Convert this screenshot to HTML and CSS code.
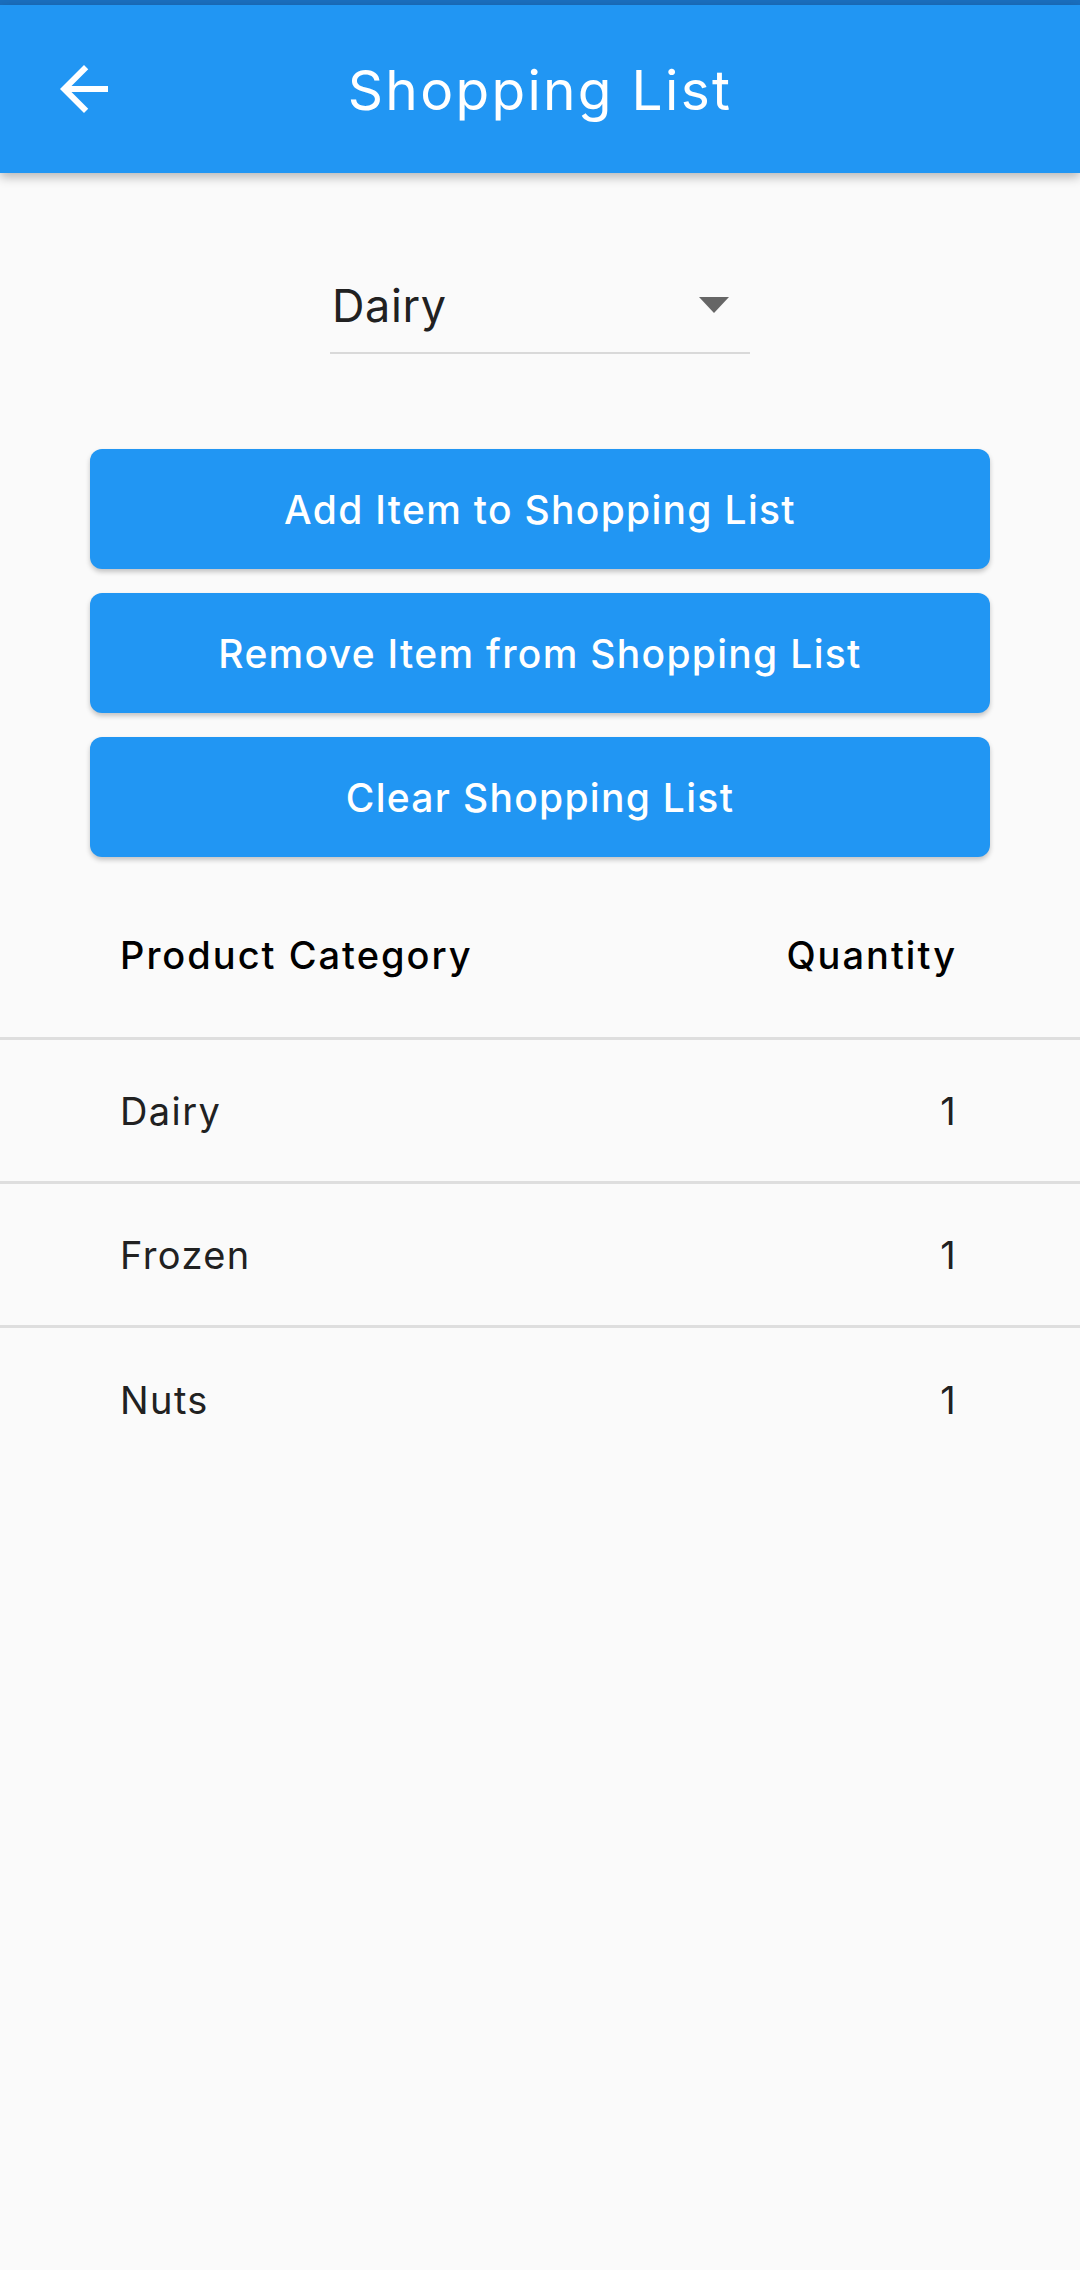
FILE: index.html
```html
<!DOCTYPE html>
<html lang="en">
<head>
<meta charset="utf-8">
<title>Shopping List</title>
<link rel="stylesheet" href="styles.css">
</head>
<body>
<div class="status-strip"></div>
<header class="app-bar">
  <button class="back-btn" aria-label="Back">
    <svg viewBox="0 0 24 24" width="72" height="72"><path fill="#fff" d="M20 11H7.83l5.59-5.59L12 4l-8 8 8 8 1.41-1.41L7.83 13H20v-2z"/></svg>
  </button>
  <h1 class="title">Shopping List</h1>
</header>
<main class="content">
  <div class="dropdown">
    <span class="dropdown-value">Dairy</span>
    <span class="dropdown-caret"></span>
  </div>
  <div class="actions">
    <button class="action-btn">Add Item to Shopping List</button>
    <button class="action-btn">Remove Item from Shopping List</button>
    <button class="action-btn">Clear Shopping List</button>
  </div>
  <div class="table">
    <div class="row head">
      <span>Product Category</span>
      <span>Quantity</span>
    </div>
    <div class="row">
      <span>Dairy</span>
      <span>1</span>
    </div>
    <div class="row">
      <span>Frozen</span>
      <span>1</span>
    </div>
    <div class="row last">
      <span>Nuts</span>
      <span>1</span>
    </div>
  </div>
</main>
</body>
</html>
```
FILE: styles.css
```css
* { box-sizing: border-box; }
html, body {
  margin: 0;
  padding: 0;
  background: #fafafa;
  font-family: Inter, "Noto Sans", Roboto, sans-serif;
}
.status-strip {
  height: 5px;
  background: #1a6fbf;
}
.app-bar {
  position: relative;
  height: 168px;
  background: #2196f3;
  display: flex;
  align-items: center;
  justify-content: center;
  box-shadow: 0 4px 10px rgba(0,0,0,0.28);
  z-index: 2;
}
.back-btn {
  position: absolute;
  left: 48px;
  top: 48px;
  width: 72px;
  height: 72px;
  padding: 0;
  border: 0;
  background: none;
  display: flex;
}
.title {
  margin: 0;
  color: #fff;
  font-size: 55px;
  font-weight: 400;
  letter-spacing: 2.3px;
  line-height: 1;
  padding-top: 2px;
}
.content {
  display: flex;
  flex-direction: column;
  align-items: center;
  padding-top: 85px;
}
.dropdown {
  width: 420px;
  height: 96px;
  border-bottom: 2px solid #d9d9d9;
  display: flex;
  align-items: center;
  justify-content: space-between;
  padding: 0 21px 0 2px;
}
.dropdown-value {
  font-size: 45px;
  color: #212121;
  letter-spacing: 0.6px;
  line-height: 1;
}
.dropdown-caret {
  width: 0;
  height: 0;
  border-left: 15px solid transparent;
  border-right: 15px solid transparent;
  border-top: 16px solid #666;
}
.actions {
  width: 900px;
  margin-top: 95px;
  display: flex;
  flex-direction: column;
  gap: 24px;
}
.action-btn {
  height: 120px;
  border: 0;
  border-radius: 12px;
  background: #2196f3;
  color: #fff;
  font-family: inherit;
  font-size: 39px;
  font-weight: 500;
  letter-spacing: 1.3px;
  box-shadow: 0 3px 5px rgba(0,0,0,0.22);
  padding: 0;
}
.table {
  width: 100%;
  margin-top: 26px;
}
.row {
  height: 144px;
  display: flex;
  align-items: center;
  justify-content: space-between;
  padding: 0 123px 0 120px;
  border-bottom: 3px solid #dedede;
  font-size: 38px;
  letter-spacing: 1.4px;
  color: #212121;
}
.row.head {
  height: 157px;
  font-weight: 500;
  color: #000;
  letter-spacing: 2px;
  padding-bottom: 10px;
}
.row.last {
  border-bottom: 0;
}
```
